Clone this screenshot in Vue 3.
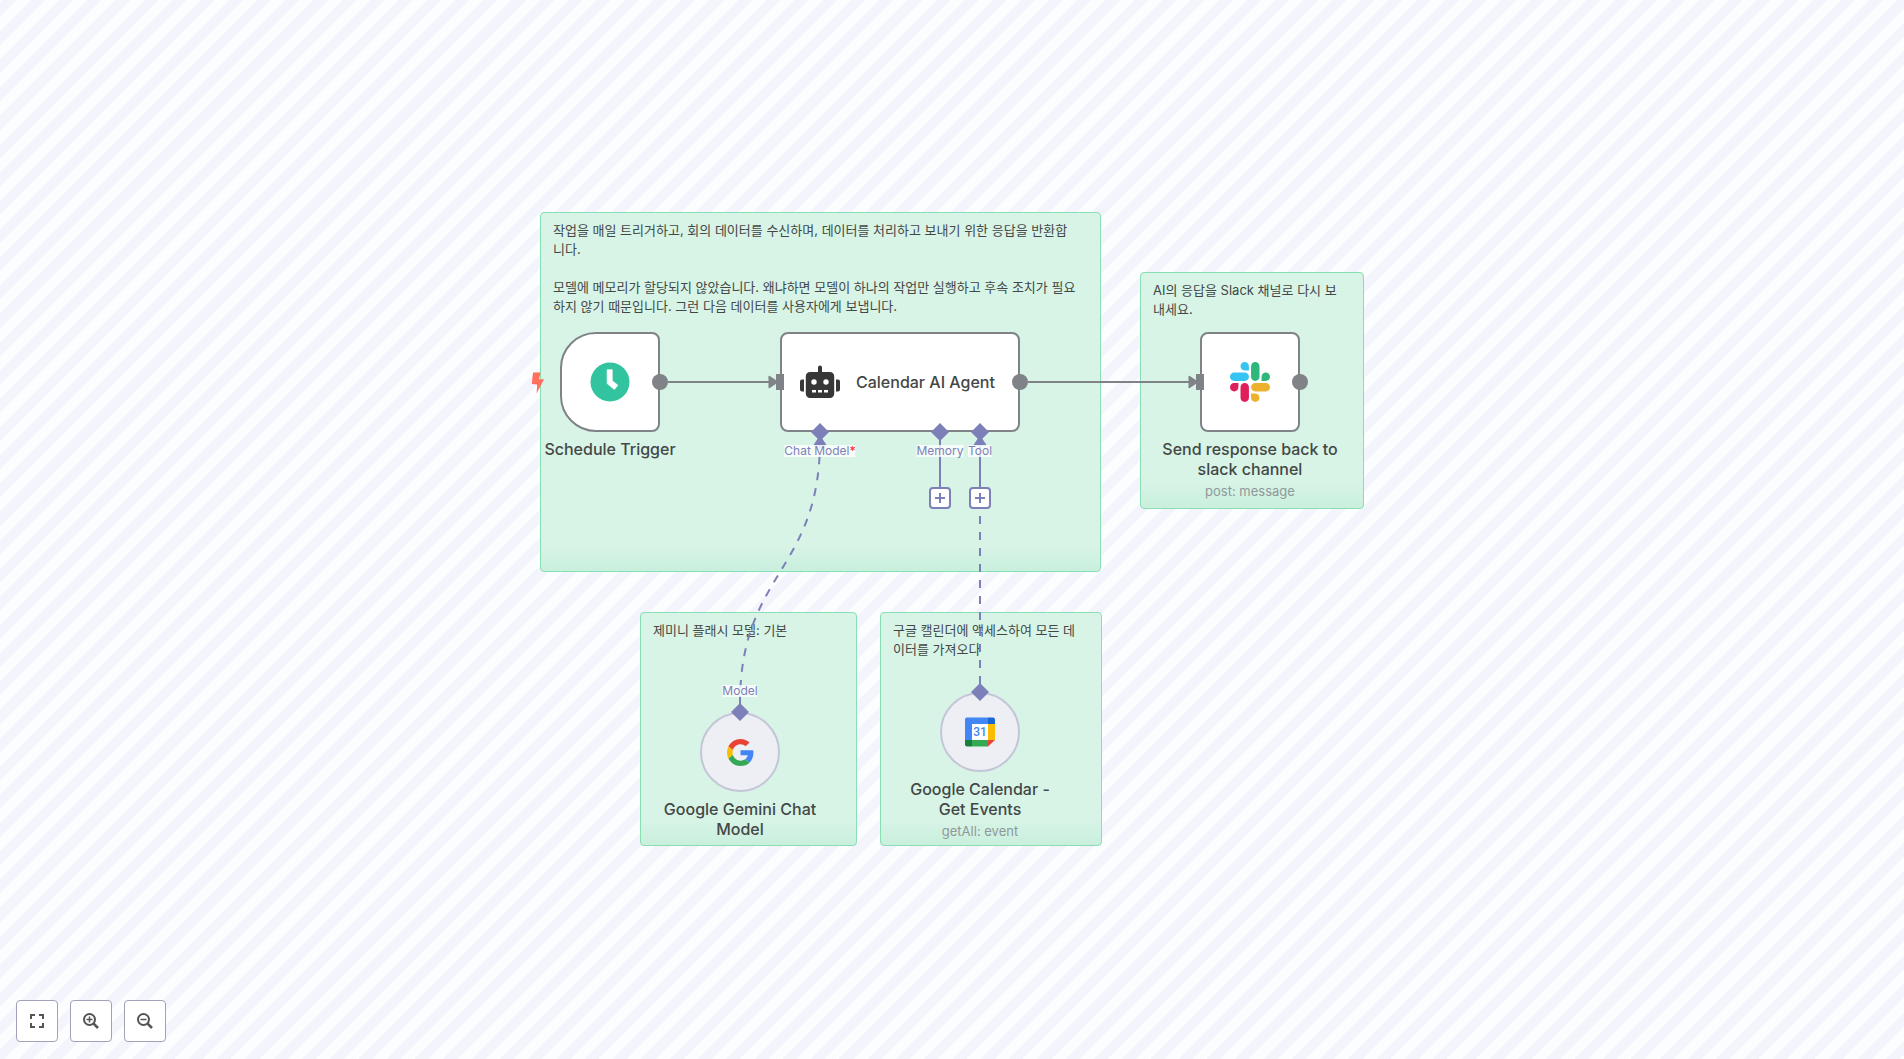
<script setup>
const stickies = [
  {
    id: 'daily',
    paragraphs: [
      '작업을 매일 트리거하고, 회의 데이터를 수신하며, 데이터를 처리하고 보내기 위한 응답을 반환합\n니다.',
      '모델에 메모리가 할당되지 않았습니다. 왜냐하면 모델이 하나의 작업만 실행하고 후속 조치가 필요\n하지 않기 때문입니다. 그런 다음 데이터를 사용자에게 보냅니다.',
    ],
  },
  { id: 'reply', paragraphs: ['AI의 응답을 Slack 채널로 다시 보\n내세요.'] },
  { id: 'gemini', paragraphs: ['제미니 플래시 모델: 기본'] },
  { id: 'events', paragraphs: ['구글 캘린더에 액세스하여 모든 데\n이터를 가져오다'] },
]
</script>

<template>
  <main class="viewport">
    <div class="stage">
      <section v-for="s in stickies" :key="s.id" class="sticky" :class="`sticky-${s.id}`">
        <p v-for="(p, i) in s.paragraphs" :key="i">{{ p }}</p>
      </section>

      <svg class="wires" width="824" height="634" viewBox="0 0 824 634" aria-hidden="true">
        <g class="main-wire">
          <path d="M128 170H230M488 170H650" />
          <path class="tip" d="M229 164L238 170L229 176ZM649 164L658 170L649 176Z" />
        </g>
        <g class="sub-wire">
          <path class="dashed" d="M200 492C200 360 280 360 280 228" />
          <path class="dashed" d="M440 472V228" />
          <path d="M400 228V276M440 228V276M200 492V500M440 472V480" />
          <path class="tip" d="M280 224L286 233H274ZM440 224L446 233H434Z" />
        </g>
      </svg>

      <article class="node trigger">
        <svg class="bolt" width="14" height="22" viewBox="0 0 14 22"><path d="M2 0.5H9.6L8 7.2H13L5.6 21.5L6.2 12.6L0.8 12Z" fill="#ff6f5c" /></svg>
        <div class="card">
          <svg width="40" height="40" viewBox="0 0 40 40">
            <circle cx="20" cy="20" r="19.5" fill="#31c49f" />
            <path d="M17.200 7.800H22.200V18.800L27.800 23.200L24.400 27.400L17.200 21.600Z" fill="#fff" stroke="#fff" stroke-width="0.8" stroke-linejoin="round" />
          </svg>
        </div>
        <h2>Schedule Trigger</h2>
      </article>

      <article class="node agent">
        <div class="card">
          <svg width="40" height="40" viewBox="0 0 40 40" fill="#373737">
            <path d="M18 5.5a2 2 0 0 1 4 0V10h8a4.2 4.2 0 0 1 4.2 4.2v17.6A4.2 4.2 0 0 1 30 36H10a4.2 4.2 0 0 1-4.2-4.2V14.200A4.200 4.200 0 0 1 10 10h8zM2 17.500h2v12H2a2 2 0 0 1-2-2v-8a2 2 0 0 1 2-2zM38 17.500h-2v12h2a2 2 0 0 0 2-2v-8a2 2 0 0 0-2-2z" />
            <g fill="#fff"><circle cx="14" cy="20" r="2.700" /><circle cx="26" cy="20" r="2.700" /><path d="M12 28h4v2.400h-4zM18 28h4v2.400h-4zM24 28h4v2.400h-4z" /></g>
          </svg>
          <h2>Calendar AI Agent</h2>
        </div>
      </article>

      <article class="node slack">
        <div class="card">
          <svg width="40" height="40" viewBox="0 0 122.8 122.8">
            <path fill="#e01e5a" d="M25.8 77.6c0 7.1-5.8 12.9-12.9 12.9S0 84.7 0 77.6s5.8-12.9 12.9-12.9h12.9v12.9zm6.5 0c0-7.1 5.8-12.9 12.9-12.9s12.9 5.8 12.9 12.9v32.3c0 7.1-5.8 12.9-12.9 12.9s-12.9-5.8-12.9-12.9V77.6z" />
            <path fill="#36c5f0" d="M45.2 25.8c-7.1 0-12.9-5.8-12.9-12.9S38.1 0 45.2 0s12.9 5.8 12.9 12.9v12.9H45.2zm0 6.500c7.1 0 12.9 5.8 12.9 12.9s-5.8 12.9-12.9 12.9H12.9C5.8 58.100 0 52.300 0 45.200s5.8-12.9 12.9-12.9h32.3z" />
            <path fill="#2eb67d" d="M97 45.200c0-7.1 5.8-12.9 12.9-12.9s12.9 5.8 12.9 12.9-5.8 12.9-12.9 12.9H97V45.200zm-6.500 0c0 7.1-5.8 12.9-12.9 12.9s-12.9-5.8-12.9-12.9V12.900C64.700 5.800 70.500 0 77.600 0s12.9 5.8 12.9 12.9v32.3z" />
            <path fill="#ecb22e" d="M77.600 97c7.1 0 12.9 5.8 12.9 12.9s-5.8 12.9-12.9 12.9-12.9-5.8-12.9-12.9V97h12.9zm0-6.500c-7.1 0-12.9-5.8-12.9-12.9s5.8-12.9 12.9-12.9h32.300c7.1 0 12.9 5.8 12.9 12.9s-5.8 12.9-12.9 12.9H77.600z" />
          </svg>
        </div>
        <h2>Send response back to slack channel</h2>
        <p>post: message</p>
      </article>

      <article class="node gemini">
        <div class="card round">
          <svg width="27" height="27" viewBox="0 0 48 48">
            <path fill="#ea4335" d="M24 9.500c3.540 0 6.710 1.220 9.210 3.600l6.850-6.850C35.900 2.380 30.470 0 24 0 14.620 0 6.510 5.380 2.560 13.220l7.980 6.190C12.430 13.720 17.740 9.500 24 9.500z" />
            <path fill="#4285f4" d="M46.980 24.550c0-1.570-.15-3.090-.38-4.550H24v9.020h12.940c-.58 2.960-2.260 5.480-4.780 7.180l7.730 6c4.510-4.180 7.090-10.360 7.090-17.650z" />
            <path fill="#fbbc05" d="M10.530 28.590c-.48-1.450-.76-2.990-.76-4.590s.27-3.140.76-4.590l-7.980-6.190C.92 16.460 0 20.120 0 24c0 3.880.92 7.540 2.560 10.780l7.970-6.190z" />
            <path fill="#34a853" d="M24 48c6.480 0 11.930-2.130 15.890-5.810l-7.730-6c-2.150 1.450-4.920 2.300-8.160 2.300-6.260 0-11.570-4.220-13.470-9.910l-7.980 6.190C6.510 42.620 14.620 48 24 48z" />
          </svg>
        </div>
        <h2>Google Gemini Chat Model</h2>
      </article>

      <article class="node calendar">
        <div class="card round">
          <svg width="30" height="30" viewBox="0 0 30 30">
            <path fill="#fff" d="M7 7h16v16H7z" />
            <path fill="#4285f4" d="M2 0.500H23V7H7V23H0V2.500A2 2 0 0 1 2 .5z" />
            <path fill="#1967d2" d="M23 .5h5a2 2 0 0 1 2 2V7h-7z" />
            <path fill="#fbbc04" d="M23 7h7v16h-7z" />
            <path fill="#34a853" d="M7 23h16v6.500H7z" />
            <path fill="#188038" d="M0 23h7v6.500H2a2 2 0 0 1-2-2z" />
            <path fill="#ea4335" d="M23 23h7l-7 6.500z" />
            <text x="15" y="19" text-anchor="middle" font-size="12" font-family="Roboto, sans-serif" font-weight="500" fill="#4285f4">31</text>
          </svg>
        </div>
        <h2>Google Calendar - Get Events</h2>
        <p>getAll: event</p>
      </article>

      <svg class="wires" width="824" height="634" viewBox="0 0 824 634" aria-hidden="true">
        <g fill="#7f8287">
          <circle cx="120" cy="170" r="8" /><circle cx="480" cy="170" r="8" /><circle cx="760" cy="170" r="8" />
          <path d="M236 162h8v16h-8zM656 162h8v16h-8z" />
        </g>
        <path fill="#7d80b8" d="M280 211l9 9-9 9-9-9zM400 211l9 9-9 9-9-9zM440 211l9 9-9 9-9-9zM200 491l9 9-9 9-9-9zM440 471l9 9-9 9-9-9z" />
      </svg>

      <span class="port port-chat">Chat Model<b>*</b></span>
      <span class="port port-memory">Memory</span>
      <span class="port port-tool">Tool</span>
      <span class="port port-model">Model</span>

      <button class="add add-memory" type="button" aria-label="Memory"><svg width="12" height="12" viewBox="0 0 12 12"><path d="M6 1V11M1 6H11" /></svg></button>
      <button class="add add-tool" type="button" aria-label="Tool"><svg width="12" height="12" viewBox="0 0 12 12"><path d="M6 1V11M1 6H11" /></svg></button>
    </div>

    <nav class="controls">
      <button type="button" aria-label="Fit view">
        <svg width="16" height="16" viewBox="0 0 16 16"><path d="M6 2H2V6M10 2H14V6M14 10V14H10M6 14H2V10" stroke-width="2" /></svg>
      </button>
      <button type="button" aria-label="Zoom in">
        <svg width="16" height="16" viewBox="0 0 16 16"><circle cx="6.500" cy="6.500" r="5.500" stroke-width="2" /><path d="M10.600 10.600L15 15" stroke-width="2.600" /><path d="M3.500 6.500h6M6.500 3.500v6" stroke-width="1.500" /></svg>
      </button>
      <button type="button" aria-label="Zoom out">
        <svg width="16" height="16" viewBox="0 0 16 16"><circle cx="6.500" cy="6.500" r="5.500" stroke-width="2" /><path d="M10.600 10.600L15 15" stroke-width="2.600" /><path d="M3.500 6.500h6" stroke-width="1.500" /></svg>
      </button>
    </nav>
  </main>
</template>

<style>
body {
  margin: 0;
}
</style>

<style scoped>
.viewport {
  position: relative;
  box-sizing: border-box;
  display: flex;
  align-items: center;
  justify-content: center;
  min-height: 100vh;
  padding-bottom: 1px;
  overflow: hidden;
  font-family: Inter, "Noto Sans CJK KR", sans-serif;
  color: #444746;
  background: repeating-linear-gradient(135deg, #fcfdff 0 2px, #f4f5fc 2px 12px, #fcfdff 12px 20px);
}
.stage {
  position: relative;
  flex: none;
  width: 824px;
  height: 634px;
}
.sticky {
  position: absolute;
  box-sizing: border-box;
  padding: 8px 12px;
  border: 1px solid #88dfb4;
  border-radius: 4px;
  background: linear-gradient(to top, #c9efdd, #d7f4e6 24px);
  font-size: 13px;
  line-height: 19px;
  white-space: pre-line;
}
.sticky p {
  margin: 0 0 19px;
}
.sticky-daily { left: 0; top: 0; width: 561px; height: 360px; }
.sticky-reply { left: 600px; top: 60px; width: 224px; height: 237px; }
.sticky-gemini { left: 100px; top: 400px; width: 217px; height: 234px; }
.sticky-events { left: 340px; top: 400px; width: 222px; height: 234px; }

.wires {
  position: absolute;
  inset: 0;
  pointer-events: none;
}
.main-wire path {
  stroke: #7f8287;
  stroke-width: 2;
}
.sub-wire path {
  fill: none;
  stroke: #7d80b8;
  stroke-width: 2;
}
.sub-wire .dashed {
  stroke-dasharray: 8 8;
}
.main-wire .tip {
  fill: #7f8287;
  stroke-width: 1;
}
.sub-wire .tip {
  fill: #7d80b8;
  stroke-width: 1;
}

.node {
  position: absolute;
  display: flex;
  flex-direction: column;
  align-items: center;
  width: 180px;
  text-align: center;
}
.trigger { left: -20px; top: 120px; }
.agent { left: 240px; top: 120px; width: 240px; }
.slack { left: 620px; top: 120px; }
.gemini { left: 120px; top: 500px; width: 160px; }
.calendar { left: 360px; top: 480px; width: 160px; }
.card {
  box-sizing: border-box;
  display: flex;
  align-items: center;
  justify-content: center;
  width: 100px;
  height: 100px;
  border: 2px solid #7f8287;
  border-radius: 8px;
  background: #fff;
}
.trigger .card {
  border-radius: 36px 8px 8px 36px;
}
.agent .card {
  justify-content: flex-start;
  gap: 16px;
  width: 240px;
  padding-left: 18px;
}
.card.round {
  width: 80px;
  height: 80px;
  border-color: #c4c6d8;
  border-radius: 50%;
  background: #eeeff5;
}
.bolt {
  position: absolute;
  left: 11px;
  top: 40px;
}
h2 {
  margin: 7px 0 0;
  font-size: 16px;
  font-weight: 450;
  line-height: 20px;
}
.agent .card h2 {
  margin: 0;
}
.node p {
  margin: 3px 0 0;
  font-size: 13px;
  line-height: 18px;
  color: #8f9899;
}

.port {
  position: absolute;
  transform: translateX(-50%);
  background: rgba(255, 255, 255, 0.8);
  font-size: 12px;
  line-height: 12px;
  white-space: nowrap;
  color: #7d80b8;
}
.port b {
  font-weight: 500;
  color: #f5313f;
}
.port-chat { left: 280px; top: 233px; }
.port-memory { left: 400px; top: 233px; }
.port-tool { left: 440px; top: 233px; }
.port-model { left: 200px; top: 473px; }

.add {
  position: absolute;
  top: 275px;
  display: flex;
  align-items: center;
  justify-content: center;
  width: 22px;
  height: 22px;
  padding: 0;
  border: 2px solid #7d80b8;
  border-radius: 4px;
  background: #fff;
}
.add svg {
  fill: none;
  stroke: #7d80b8;
  stroke-width: 2;
}
.add-memory { left: 389px; }
.add-tool { left: 429px; }

.controls {
  position: absolute;
  left: 16px;
  bottom: 17px;
  display: flex;
  gap: 12px;
}
.controls button {
  display: flex;
  align-items: center;
  justify-content: center;
  width: 42px;
  height: 42px;
  padding: 0;
  border: 1px solid #a0a3b8;
  border-radius: 4px;
  background: #fff;
}
.controls svg {
  fill: none;
  stroke: #555;
}
</style>
